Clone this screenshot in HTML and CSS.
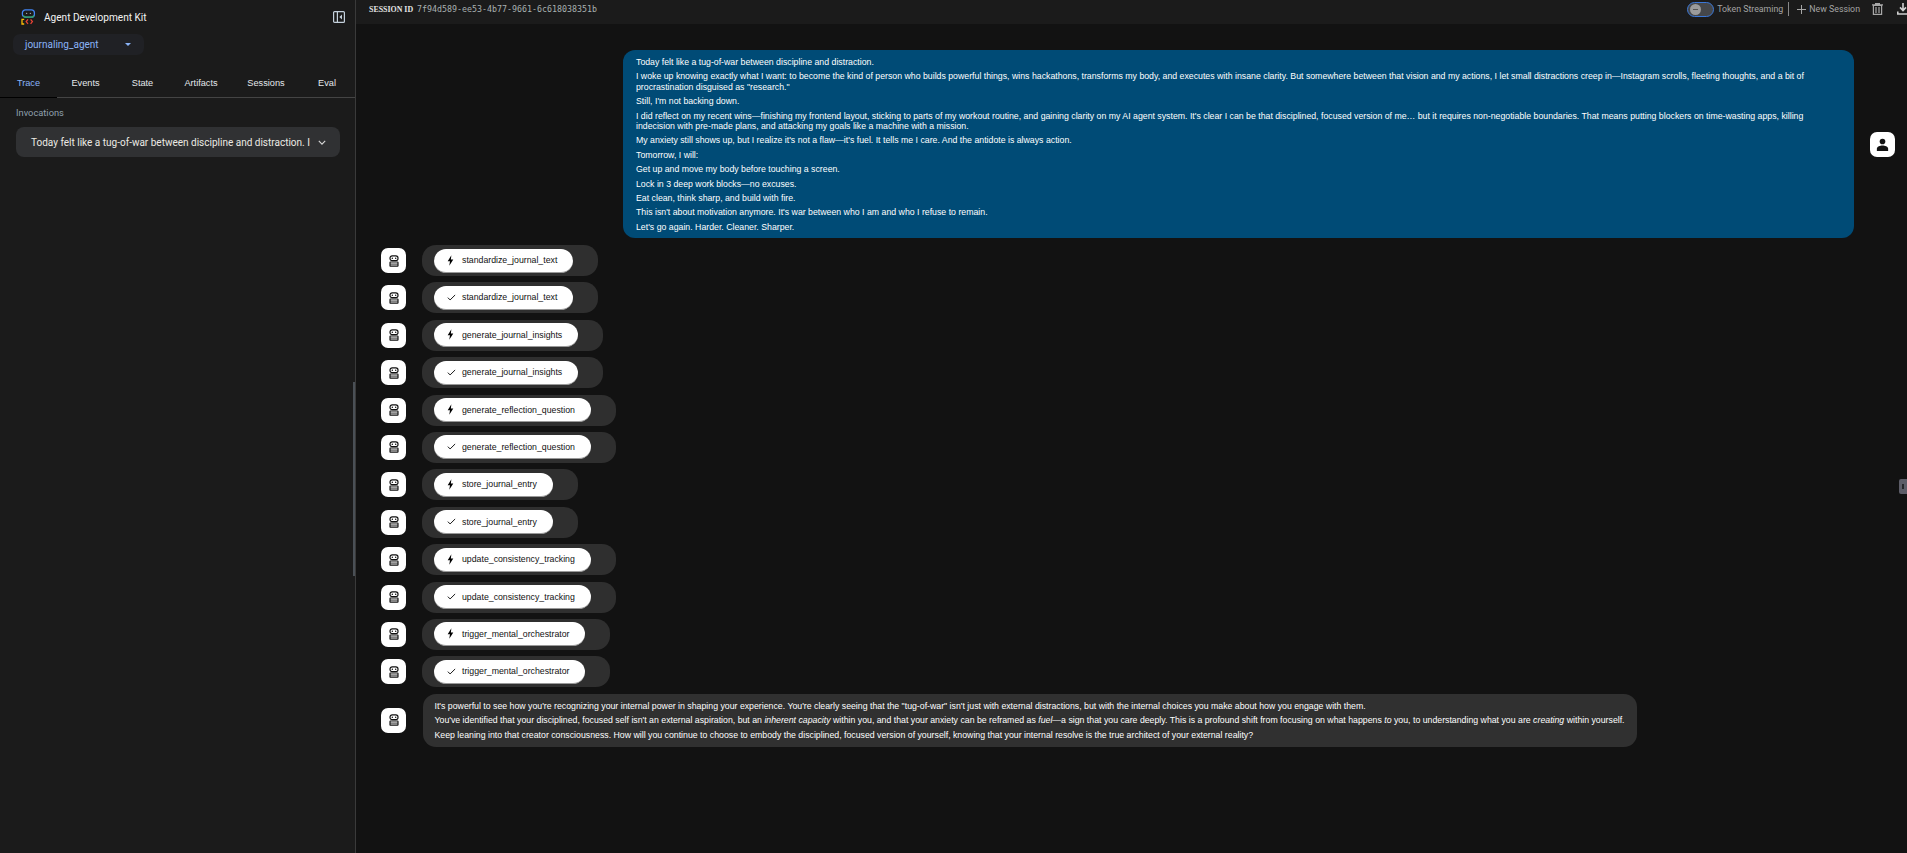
FILE: index.html
```html
<!DOCTYPE html>
<html lang="en">
<head>
<meta charset="utf-8">
<title>Agent Development Kit</title>
<link rel="stylesheet" href="styles.css">
</head>
<body>
<svg class="sprite" width="0" height="0">
  <symbol id="bot" viewBox="0 0 12 14">
    <rect x="1.2" y="0.8" width="9.6" height="5.8" rx="2.6" fill="none" stroke="#111" stroke-width="1.4"/>
    <circle cx="4" cy="3.700" r=".9" fill="#111"/><circle cx="8" cy="3.700" r=".9" fill="#111"/>
    <rect x="1.2" y="8.200" width="9.6" height="5" rx=".5" fill="none" stroke="#111" stroke-width="1.4"/>
    <path d="M1.200 10.700h9.600" stroke="#111" stroke-width="1.100"/>
  </symbol>
  <symbol id="bolt" viewBox="0 0 8 12">
    <path d="M5 0 .8 6.900h2.600L2.600 12 7.200 4.800H4.400z" fill="#000"/>
  </symbol>
  <symbol id="check" viewBox="0 0 12 10">
    <path d="M.8 5.200 4 8.500 11.200 1.400" fill="none" stroke="#000" stroke-width="1.300"/>
  </symbol>
</svg>
<div class="app">
  <aside class="sidebar">
    <div class="brand">
      <svg class="logo" viewBox="0 0 15 16" width="15" height="16">
        <rect x="1.400" y="0.800" width="12" height="7.400" rx="3" fill="none" stroke="#4285f4" stroke-width="1.300"/>
        <path d="M2.400 6.600c.6 1.200 1.600 1.600 3 1.600h4.400c1.400 0 2.400-.4 3-1.600" fill="none" stroke="#34a853" stroke-width="1.300"/>
        <circle cx="5.600" cy="4.400" r=".7" fill="#9aa0a6"/><circle cx="9.400" cy="4.400" r=".7" fill="#9aa0a6"/>
        <path d="M3.200 10.400H1v4.600h2.200" fill="none" stroke="#fbbc04" stroke-width="1.300"/>
        <path d="M7 10.400 5.200 12.600 7 14.800" fill="none" stroke="#ea4335" stroke-width="1.300"/>
        <path d="M9.600 10.400 11.400 12.600 9.600 14.800" fill="none" stroke="#ea4335" stroke-width="1.300"/>
      </svg>
      <span class="brand-name">Agent Development Kit</span>
      <svg class="panel-icon" viewBox="0 0 12 12" width="12" height="12">
        <rect x=".6" y=".6" width="10.800" height="10.800" rx="1" fill="none" stroke="#c4d0dc" stroke-width="1.200"/>
        <path d="M4.400 1v10" stroke="#c4d0dc" stroke-width="1.200"/>
        <path d="M9 3.600v4.800L6.400 6z" fill="#c4d0dc"/>
      </svg>
    </div>
    <div class="agent-select">
      <span>journaling_agent</span>
      <i class="caret"></i>
    </div>
    <nav class="tabs">
      <a class="tab active">Trace</a>
      <a class="tab">Events</a>
      <a class="tab">State</a>
      <a class="tab">Artifacts</a>
      <a class="tab">Sessions</a>
      <a class="tab">Eval</a>
    </nav>
    <div class="invocations">
      <div class="inv-title">Invocations</div>
      <div class="inv-panel">
        <span class="inv-text">Today felt like a tug-of-war between discipline and distraction. I</span>
        <svg class="chev" viewBox="0 0 10 6" width="8" height="5"><path d="M1 1l4 4 4-4" fill="none" stroke="#d8d8d8" stroke-width="1.400"/></svg>
      </div>
    </div>
    <div class="side-scroll"></div>
  </aside>
  <main class="main">
    <header class="topbar">
      <div class="session">
        <span class="session-label">SESSION ID</span>
        <span class="session-id">7f94d589-ee53-4b77-9661-6c618038351b</span>
      </div>
      <div class="actions">
        <span class="toggle"><i class="thumb"></i></span>
        <span class="action-text">Token Streaming</span>
        <span class="divider"></span>
        <svg class="plus" viewBox="0 0 10 10" width="9" height="9"><path d="M5 0v10M0 5h10" stroke="#a8a8a8" stroke-width="1.100"/></svg>
        <span class="action-text">New Session</span>
        <svg class="trash" viewBox="0 0 11 12" width="11" height="12"><path d="M0 1.800h11M3.600 1.600V.6h3.800v1M1.400 2.400h8.200V11.400H1.400zM4 4v6M7 4v6" fill="none" stroke="#a8a8a8" stroke-width="1.200"/></svg>
        <svg class="download" viewBox="0 0 12 12" width="12" height="12"><path d="M6 0v7M3 4.400 6 7.600l3-3.200" fill="none" stroke="#d0d0d0" stroke-width="1.600"/><path d="M.8 8.400v2.600h10.400V8.400" fill="none" stroke="#d0d0d0" stroke-width="1.600"/></svg>
      </div>
    </header>
    <section class="chat">
      <div class="row row-user">
        <div class="bubble-user">
          <p>Today felt like a tug-of-war between discipline and distraction.</p>
          <p>I woke up knowing exactly what I want: to become the kind of person who builds powerful things, wins hackathons, transforms my body, and executes with insane clarity. But somewhere between that vision and my actions, I let small distractions creep in—Instagram scrolls, fleeting thoughts, and a bit of procrastination disguised as "research."</p>
          <p>Still, I'm not backing down.</p>
          <p>I did reflect on my recent wins—finishing my frontend layout, sticking to parts of my workout routine, and gaining clarity on my AI agent system. It's clear I can be that disciplined, focused version of me… but it requires non-negotiable boundaries. That means putting blockers on time-wasting apps, killing indecision with pre-made plans, and attacking my goals like a machine with a mission.</p>
          <p>My anxiety still shows up, but I realize it's not a flaw—it's fuel. It tells me I care. And the antidote is always action.</p>
          <p>Tomorrow, I will:</p>
          <p>Get up and move my body before touching a screen.</p>
          <p>Lock in 3 deep work blocks—no excuses.</p>
          <p>Eat clean, think sharp, and build with fire.</p>
          <p>This isn't about motivation anymore. It's war between who I am and who I refuse to remain.</p>
          <p>Let's go again. Harder. Cleaner. Sharper.</p>
        </div>
        <div class="avatar">
          <svg viewBox="0 0 12 12" width="13" height="13"><circle cx="6" cy="3.200" r="2.600" fill="#111"/><path d="M.8 12V10c0-2 3-3 5.200-3s5.200 1 5.200 3v2z" fill="#111"/></svg>
        </div>
      </div>

      <div class="row"><div class="avatar"><svg class="bot"><use href="#bot"/></svg></div><div class="tool-wrap"><div class="pill"><svg class="ic-bolt"><use href="#bolt"/></svg><span>standardize_journal_text</span></div></div></div>
      <div class="row"><div class="avatar"><svg class="bot"><use href="#bot"/></svg></div><div class="tool-wrap"><div class="pill"><svg class="ic-check"><use href="#check"/></svg><span>standardize_journal_text</span></div></div></div>
      <div class="row"><div class="avatar"><svg class="bot"><use href="#bot"/></svg></div><div class="tool-wrap"><div class="pill"><svg class="ic-bolt"><use href="#bolt"/></svg><span>generate_journal_insights</span></div></div></div>
      <div class="row"><div class="avatar"><svg class="bot"><use href="#bot"/></svg></div><div class="tool-wrap"><div class="pill"><svg class="ic-check"><use href="#check"/></svg><span>generate_journal_insights</span></div></div></div>
      <div class="row"><div class="avatar"><svg class="bot"><use href="#bot"/></svg></div><div class="tool-wrap"><div class="pill"><svg class="ic-bolt"><use href="#bolt"/></svg><span>generate_reflection_question</span></div></div></div>
      <div class="row"><div class="avatar"><svg class="bot"><use href="#bot"/></svg></div><div class="tool-wrap"><div class="pill"><svg class="ic-check"><use href="#check"/></svg><span>generate_reflection_question</span></div></div></div>
      <div class="row"><div class="avatar"><svg class="bot"><use href="#bot"/></svg></div><div class="tool-wrap"><div class="pill"><svg class="ic-bolt"><use href="#bolt"/></svg><span>store_journal_entry</span></div></div></div>
      <div class="row"><div class="avatar"><svg class="bot"><use href="#bot"/></svg></div><div class="tool-wrap"><div class="pill"><svg class="ic-check"><use href="#check"/></svg><span>store_journal_entry</span></div></div></div>
      <div class="row"><div class="avatar"><svg class="bot"><use href="#bot"/></svg></div><div class="tool-wrap"><div class="pill"><svg class="ic-bolt"><use href="#bolt"/></svg><span>update_consistency_tracking</span></div></div></div>
      <div class="row"><div class="avatar"><svg class="bot"><use href="#bot"/></svg></div><div class="tool-wrap"><div class="pill"><svg class="ic-check"><use href="#check"/></svg><span>update_consistency_tracking</span></div></div></div>
      <div class="row"><div class="avatar"><svg class="bot"><use href="#bot"/></svg></div><div class="tool-wrap"><div class="pill"><svg class="ic-bolt"><use href="#bolt"/></svg><span>trigger_mental_orchestrator</span></div></div></div>
      <div class="row"><div class="avatar"><svg class="bot"><use href="#bot"/></svg></div><div class="tool-wrap"><div class="pill"><svg class="ic-check"><use href="#check"/></svg><span>trigger_mental_orchestrator</span></div></div></div>

      <div class="row row-final">
        <div class="avatar"><svg class="bot"><use href="#bot"/></svg></div>
        <div class="bubble-bot">
          <p>It's powerful to see how you're recognizing your internal power in shaping your experience. You're clearly seeing that the "tug-of-war" isn't just with external distractions, but with the internal choices you make about how you engage with them.</p>
          <p>You've identified that your disciplined, focused self isn't an external aspiration, but an <em>inherent capacity</em> within you, and that your anxiety can be reframed as <em>fuel</em>—a sign that you care deeply. This is a profound shift from focusing on what happens <em>to</em> you, to understanding what you are <em>creating</em> within yourself.</p>
          <p>Keep leaning into that creator consciousness. How will you continue to choose to embody the disciplined, focused version of yourself, knowing that your internal resolve is the true architect of your external reality?</p>
        </div>
      </div>
    </section>
    <div class="edge-handle"></div>
  </main>
</div>
</body>
</html>
```
FILE: styles.css
```css
* { box-sizing: border-box; }
html, body { margin: 0; height: 100%; overflow: hidden; }
body { background: #121212; color: #e8e8e8; font-family: "Roboto", "Liberation Sans", sans-serif; font-size: 10px; }
.sprite { position: absolute; }
p { margin: 0; }

.app { display: flex; height: 853px; }

.sidebar { position: relative; width: 356px; flex: none; background: #1b1b1b; border-right: 1px solid #3a3a3a; }
.brand { display: flex; align-items: center; height: 34px; padding: 0 10px 0 21px; }
.logo { flex: none; }
.brand-name { margin-left: 8px; color: #f2f2f2; font-size: 10.1px; flex: 1; }
.panel-icon { flex: none; }
.agent-select { display: flex; align-items: center; justify-content: space-between; width: 131px; height: 21px; margin-left: 13px; padding: 0 12px; background: #202125; border-radius: 7px; color: #8ab4f8; font-size: 10px; }
.caret { width: 0; height: 0; border: 3px solid transparent; border-top: 3px solid #8ab4f8; border-bottom: 0; margin-right: 1px; }

.tabs { display: flex; height: 43px; border-bottom: 1px solid #444; align-items: center; }
.tab { padding: 12px 0 0; color: #e4e8ec; font-family: "Liberation Sans", sans-serif; font-size: 9.2px; text-align: center; width: 57px; height: 43px; line-height: 32px; }
.tab.active { color: #8ab4f8; border-bottom: 1px solid #000; }
.tab:nth-child(4) { width: 60px; }
.tab:nth-child(5) { width: 70px; }
.tab:nth-child(6) { width: 52px; }

.invocations { padding: 9px 15px 0 16px; }
.inv-title { color: #8fa0ae; font-size: 9.3px; line-height: 12px; }
.inv-panel { display: flex; align-items: center; height: 30px; margin-top: 8px; padding: 0 14px 0 15px; background: #303133; border-radius: 8px; }
.inv-text { white-space: nowrap; color: #eceae4; font-size: 10px; }
.chev { margin-left: auto; }
.side-scroll { position: absolute; top: 382px; right: 0; width: 2px; height: 194px; background: #4a5056; }

.main { position: relative; flex: 1; min-width: 0; display: flex; flex-direction: column; }
.topbar { display: flex; align-items: center; justify-content: space-between; height: 24px; padding: 0 0 6px 13px; background: #1b1b1b; flex: none; }
.session { display: flex; align-items: center; gap: 4px; }
.session-label { font-family: "Liberation Serif", serif; font-weight: 700; font-size: 7.9px; color: #e4e4e4; }
.session-id { font-family: "DejaVu Sans Mono", "Liberation Mono", monospace; font-size: 8.3px; color: #a8b0b0; }
.actions { display: flex; align-items: center; }
.toggle { position: relative; width: 27px; height: 15px; margin-right: 3px; border: 1px solid #3b78d8; border-radius: 8px; background: #45474a; }
.thumb { position: absolute; left: 2px; top: 1.500px; width: 11px; height: 11px; border-radius: 50%; background: #9b9b9b; }
.thumb::after { content: ""; position: absolute; left: 3px; right: 3px; top: 5px; height: 1px; background: #555; }
.action-text { color: #a4a4a4; font-size: 8.8px; white-space: nowrap; }
.divider { width: 1px; height: 14px; margin: 0 8px 0 5px; background: #888; }
.plus { margin-right: 3px; }
.trash { margin-left: 12px; }
.download { margin-left: 14px; margin-right: -2px; }

.chat { flex: 1; min-height: 0; padding: 26px 12px 0 25px; }
.row { display: flex; align-items: center; gap: 16px; margin-bottom: 6.4px; }
.row-user { justify-content: flex-end; margin-bottom: 7px; }
.row-final { margin-top: 1px; }
.avatar { flex: none; display: flex; align-items: center; justify-content: center; width: 25px; height: 25px; background: #fff; border-radius: 7px; }
.bot { width: 10px; height: 12px; }
.bubble-user { flex: none; width: 1231px; height: 188px; padding: 7px 20px 0 13px; background: #004b76; border-radius: 12px; color: #fff; font-family: "Liberation Sans", sans-serif; font-size: 8.75px; line-height: 10.4px; }
.bubble-user p { margin-bottom: 4px; }
.tool-wrap { display: flex; align-items: center; height: 31px; padding: 0 25px 0 12px; background: #2f2f2f; border-radius: 14px; }
.pill { display: flex; align-items: center; height: 24px; padding: 0 16px 0 13px; background: #fff; border-radius: 12px; color: #111; font-family: "Liberation Sans", sans-serif; font-size: 8.75px; border-bottom: 1px solid #999; }
.ic-bolt { width: 7px; height: 11px; margin: 0 8px 0 0; }
.ic-check { width: 9px; height: 7px; margin: 0 6px 0 0; }
.bubble-bot { flex: none; width: 1214px; height: 53px; margin-left: 1px; padding: 7px 8px 0 11.5px; background: #303030; border-radius: 13px; color: #fff; font-family: "Liberation Sans", sans-serif; font-size: 8.75px; line-height: 10.4px; }
.bubble-bot p { margin-bottom: 4px; }

.edge-handle { position: absolute; top: 479px; right: 0; width: 8px; height: 15px; background: #5d5d68; border-radius: 2px 0 0 2px; }
.edge-handle::after { content: ""; position: absolute; left: 3px; top: 5px; width: 2px; height: 5px; background: #26262a; }
```
